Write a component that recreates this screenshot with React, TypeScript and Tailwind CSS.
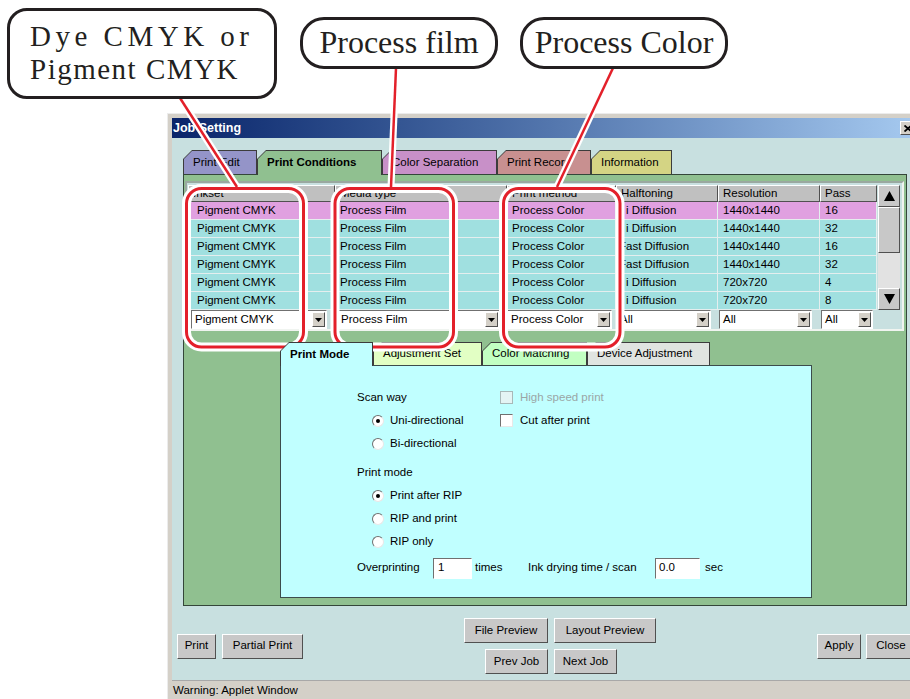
// Job Setting dialog (Java applet look) with the manual's callout annotations laid over it.

const raised = 'border border-t-white border-l-white border-r-[#505050] border-b-[#505050]';
const sunken = 'border border-t-[#707070] border-l-[#707070] border-r-white border-b-white';

const colWidths = ['w-[147px]', 'w-[172px]', 'w-[109px]', 'w-[102px]', 'w-[102px]', 'w-[57px]'];
const headers = ['Inkset', 'Media type', 'Print method', 'Halftoning', 'Resolution', 'Pass'];

const rows = [
  ['Pigment CMYK', 'Process Film', 'Process Color', 'i Diffusion', '1440x1440', '16'],
  ['Pigment CMYK', 'Process Film', 'Process Color', 'i Diffusion', '1440x1440', '32'],
  ['Pigment CMYK', 'Process Film', 'Process Color', 'Fast Diffusion', '1440x1440', '16'],
  ['Pigment CMYK', 'Process Film', 'Process Color', 'Fast Diffusion', '1440x1440', '32'],
  ['Pigment CMYK', 'Process Film', 'Process Color', 'i Diffusion', '720x720', '4'],
  ['Pigment CMYK', 'Process Film', 'Process Color', 'i Diffusion', '720x720', '8'],
];

// left padding of the data cells, per column (halftoning depends on the text)
function cellPad(col: number, text: string) {
  if (col === 0) return 'pl-[9px]';
  if (col === 3) return text.startsWith('Fast') ? 'pl-[3px]' : 'pl-[10px]';
  return 'pl-[5px]';
}

const combos = [
  { text: 'Pigment CMYK', pad: 'pl-[3px]', w: 'w-[136px]' },
  { text: 'Process Film', pad: 'pl-[2px]', w: 'w-[163px]' },
  { text: 'Process Color', pad: 'pl-0', w: 'w-[105px]' },
  { text: 'All', pad: 'pl-0', w: 'w-[95px]' },
  { text: 'All', pad: 'pl-[1px]', w: 'w-[93px]' },
  { text: 'All', pad: 'pl-[1px]', w: 'w-[52px]' },
];

function Tab({ label, w, bg, h, selected }: { label: string; w: string; bg: string; h: string; selected?: boolean }) {
  return (
    <div
      className={`relative ${w} ${h} bg-[#3c3c3c] px-[1px] pt-[1px] [clip-path:polygon(0_9px,9px_0,100%_0,100%_100%,0_100%)] ${selected ? 'z-10 -mb-[1px]' : ''}`}
    >
      <div
        className={`flex h-full items-center pl-[9px] ${bg} ${selected ? 'font-bold' : ''} [clip-path:polygon(0_8px,8px_0,100%_0,100%_100%,0_100%)]`}
      >
        {label}
      </div>
    </div>
  );
}

function Combo({ text, w }: { text: string; w: string }) {
  return (
    <div className={`flex h-[19px] ${w} items-stretch bg-white ${sunken}`}>
      <div className="flex flex-1 items-center overflow-hidden whitespace-nowrap pl-[3px]">{text}</div>
      <div className={`m-[1px] flex w-[13px] items-center justify-center bg-[#d4d0c8] ${raised}`}>
        <svg width="7" height="4" viewBox="0 0 7 4">
          <path d="M0 0h7L3.5 4z" fill="#000" />
        </svg>
      </div>
    </div>
  );
}

function Radio({ label, checked }: { label: string; checked?: boolean }) {
  return (
    <div className="flex h-[23px] items-center pl-[15px]">
      <span className="flex h-[12px] w-[12px] items-center justify-center rounded-full border border-t-[#707070] border-l-[#707070] border-r-[#e8e8e8] border-b-[#e8e8e8] bg-white">
        {checked && <span className="h-[4px] w-[4px] rounded-full bg-black" />}
      </span>
      <span className="ml-[6px]">{label}</span>
    </div>
  );
}

function Check({ label, disabled }: { label: string; disabled?: boolean }) {
  return (
    <div className="flex h-[23px] items-center">
      <span
        className={`h-[13px] w-[13px] border ${disabled ? 'border-[#a8b8b8] bg-[#e4f4f4]' : 'border-t-[#707070] border-l-[#707070] border-r-[#e8e8e8] border-b-[#e8e8e8] bg-white'}`}
      />
      <span className={`ml-[7px] ${disabled ? 'text-[#9aa6a6]' : ''}`}>{label}</span>
    </div>
  );
}

function Btn({ label, w }: { label: string; w: string }) {
  return (
    <div className={`flex h-[25px] ${w} items-center justify-center bg-[#c8c8c8] ${raised}`}>{label}</div>
  );
}

function Arrow({ up }: { up?: boolean }) {
  return (
    <div className={`flex h-[22px] items-center justify-center bg-[#c8c8c8] ${raised}`}>
      <svg width="11" height="10" viewBox="0 0 11 10">
        <path d={up ? 'M5.5 0L11 10H0z' : 'M0 0h11L5.5 10z'} fill="#000" />
      </svg>
    </div>
  );
}

function Table() {
  return (
    <div className="ml-[1px] mr-[2px] border-2 border-t-[#9aa8a0] border-l-[#9aa8a0] border-r-[#f0f4f0] border-b-[#f0f4f0] bg-[#c8e0e0] pl-[1px] pt-[2px]">
      <div className="flex">
        <div className="w-[689px]">
          <div className="flex h-[17px]">
            {headers.map((h, i) => (
              <div key={h} className={`${colWidths[i]} flex items-center bg-[#c0c0c0] pl-[4px] ${raised}`}>
                {h}
              </div>
            ))}
          </div>
          {rows.map((r, ri) => (
            <div key={ri} className="flex h-[18px]">
              {r.map((c, ci) => (
                <div
                  key={ci}
                  className={`${colWidths[ci]} flex items-center whitespace-nowrap border-b border-r border-[#e4eeee] ${ri === 0 ? 'bg-[#e0a0e0]' : 'bg-[#a0e0e0]'} ${cellPad(ci, c)}`}
                >
                  {c}
                </div>
              ))}
            </div>
          ))}
        </div>
        <div className="ml-[1px] flex w-[22px] flex-col">
          <Arrow up />
          <div className={`h-[46px] bg-[#c8c8c8] ${raised}`} />
          <div className="flex-1 bg-[#e2e2e2]" />
          <Arrow />
        </div>
      </div>
      <div className="flex h-[19px]">
        {combos.map((c, i) => (
          <div key={i} className={`${colWidths[i]} ${c.pad}`}>
            <Combo text={c.text} w={c.w} />
          </div>
        ))}
      </div>
    </div>
  );
}

function PrintMode() {
  return (
    <div className="pl-[76px] pt-[20px]">
      <div className="flex">
        <div className="w-[143px]">
          <div className="flex h-[23px] items-center">Scan way</div>
          <Radio label="Uni-directional" checked />
          <Radio label="Bi-directional" />
        </div>
        <div>
          <Check label="High speed print" disabled />
          <Check label="Cut after print" />
        </div>
      </div>
      <div className="mt-[6px] flex h-[23px] items-center">Print mode</div>
      <Radio label="Print after RIP" checked />
      <Radio label="RIP and print" />
      <Radio label="RIP only" />
      <div className="mt-[3px] flex h-[24px] items-center">
        <span className="w-[76px]">Overprinting</span>
        <div className={`flex h-[21px] w-[39px] items-center bg-white pl-[4px] ${sunken} border-t-[#404040] border-l-[#404040]`}>1</div>
        <span className="ml-[3px] w-[53px]">times</span>
        <span className="w-[127px]">Ink drying time / scan</span>
        <div className={`flex h-[21px] w-[45px] items-center bg-white pl-[3px] ${sunken} border-t-[#404040] border-l-[#404040]`}>0.0</div>
        <span className="ml-[5px]">sec</span>
      </div>
    </div>
  );
}

function Window() {
  return (
    <div className="w-[755px] border-l border-t border-[#ececec] bg-[#d4d0c8] pl-[4px] pr-[4px] pt-[4px]">
      {/* title bar */}
      <div className="flex h-[20px] items-center justify-between bg-gradient-to-r from-[#0a246a] to-[#a6caf0] pl-[1px] pr-[2px]">
        <span className="text-[12.5px] font-bold text-white">Job Setting</span>
        <div className={`flex h-[14px] w-[16px] items-center justify-center bg-[#d4d0c8] ${raised}`}>
          <svg width="8" height="7" viewBox="0 0 8 7">
            <path d="M0.5 0.5l7 6M7.5 0.5l-7 6" stroke="#000" strokeWidth="1.8" />
          </svg>
        </div>
      </div>

      <div className="bg-[#c8e0e0]">
        <div className="px-[11px] pt-[12px]">
          <div className="flex h-[24px] items-end">
            <Tab label="Print Edit" w="w-[74px]" h="h-[24px]" bg="bg-[#9494c8]" />
            <Tab label="Print Conditions" w="w-[125px]" h="h-[25px]" bg="bg-[#90c090]" selected />
            <Tab label="Color Separation" w="w-[115px]" h="h-[24px]" bg="bg-[#c890c8]" />
            <Tab label="Print Record" w="w-[94px]" h="h-[24px]" bg="bg-[#c89090]" />
            <Tab label="Information" w="w-[81px]" h="h-[24px]" bg="bg-[#d4d484]" />
          </div>

          <div className="h-[432px] border border-[#34463a] bg-[#90c090] pt-[6px]">
            <Table />
            <div className="ml-[96px] mt-[11px] w-[532px]">
              <div className="flex h-[23px] items-end">
                <Tab label="Print Mode" w="w-[93px]" h="h-[24px]" bg="bg-[#c0ffff]" selected />
                <Tab label="Adjustment Set" w="w-[109px]" h="h-[23px]" bg="bg-[#e2ffc4]" />
                <Tab label="Color Matching" w="w-[105px]" h="h-[23px]" bg="bg-[#c2ffc2]" />
                <Tab label="Device Adjustment" w="w-[123px]" h="h-[23px]" bg="bg-[#e0e4e0]" />
              </div>
              <div className="h-[233px] border border-[#3c4c4c] bg-[#c0ffff]">
                <PrintMode />
              </div>
            </div>
          </div>
        </div>

        {/* bottom buttons */}
        <div className="flex h-[74px] items-center pl-[5px] pt-[6px]">
          <div className="flex gap-[6px]">
            <Btn label="Print" w="w-[39px]" />
            <Btn label="Partial Print" w="w-[81px]" />
          </div>
          <div className="ml-[161px] grid grid-cols-[84px_102px] gap-x-[6px] gap-y-[6px]">
            <Btn label="File Preview" w="w-[84px]" />
            <Btn label="Layout Preview" w="w-[102px]" />
            <div className="flex justify-end">
              <Btn label="Prev Job" w="w-[63px]" />
            </div>
            <Btn label="Next Job" w="w-[63px]" />
          </div>
          <div className="ml-[161px] flex gap-[5px]">
            <Btn label="Apply" w="w-[44px]" />
            <Btn label="Close" w="w-[50px]" />
          </div>
        </div>

        <div className="flex h-[20px] items-center border-t border-[#a8a8a8] bg-[#d4d0c8] pl-[1px]">
          Warning: Applet Window
        </div>
      </div>
    </div>
  );
}

function Callouts() {
  const rings = [
    { x: 186.5, w: 117 },
    { x: 335, w: 118.5 },
    { x: 503.5, w: 116.5 },
  ];
  const lines = [
    [180, 98, 237, 187],
    [396, 68, 391, 187],
    [613, 68, 557, 187],
  ];
  const serif = "font-['Liberation_Serif','Times_New_Roman',serif] text-[#231f20]";
  return (
    <>
      <svg className="pointer-events-none absolute left-0 top-0" width="910" height="699">
        <g fill="none" stroke="#fff">
          {rings.map((r, i) => (
            <rect key={i} x={r.x} y={188.5} width={r.w} height={158.5} rx={15} strokeWidth={9} />
          ))}
          {lines.map((l, i) => (
            <line key={i} x1={l[0]} y1={l[1]} x2={l[2]} y2={l[3]} strokeWidth={7} />
          ))}
        </g>
        <g fill="none" stroke="#e3202a">
          {rings.map((r, i) => (
            <rect key={i} x={r.x} y={188.5} width={r.w} height={158.5} rx={15} strokeWidth={3} />
          ))}
          {lines.map((l, i) => (
            <line key={i} x1={l[0]} y1={l[1]} x2={l[2]} y2={l[3]} strokeWidth={2.5} />
          ))}
        </g>
      </svg>

      <div className={`absolute left-[7px] top-[8px] h-[91px] w-[270px] rounded-[20px] border-[3px] border-[#231f20] bg-white pl-[20px] pt-[9px] text-[29px] leading-[32.5px] ${serif}`}>
        <div className="tracking-[4.5px]">Dye CMYK or</div>
        <div className="tracking-[1.5px]">Pigment CMYK</div>
      </div>
      <div className={`absolute left-[300px] top-[17px] flex h-[52px] w-[198px] items-center justify-center rounded-[24px] border-[3px] border-[#231f20] bg-white pb-[2px] text-[32px] leading-none ${serif}`}>
        Process film
      </div>
      <div className={`absolute left-[520px] top-[17px] flex h-[52px] w-[208px] items-center justify-center rounded-[24px] border-[3px] border-[#231f20] bg-white pb-[2px] text-[32px] leading-none ${serif}`}>
        Process Color
      </div>
    </>
  );
}

export default function App() {
  return (
    <div className="relative h-[699px] w-[910px] overflow-hidden bg-white font-['Liberation_Sans',Arial,sans-serif] text-[11.5px] text-black">
      <div className="pl-[167px] pt-[113px]">
        <Window />
      </div>
      <Callouts />
    </div>
  );
}
